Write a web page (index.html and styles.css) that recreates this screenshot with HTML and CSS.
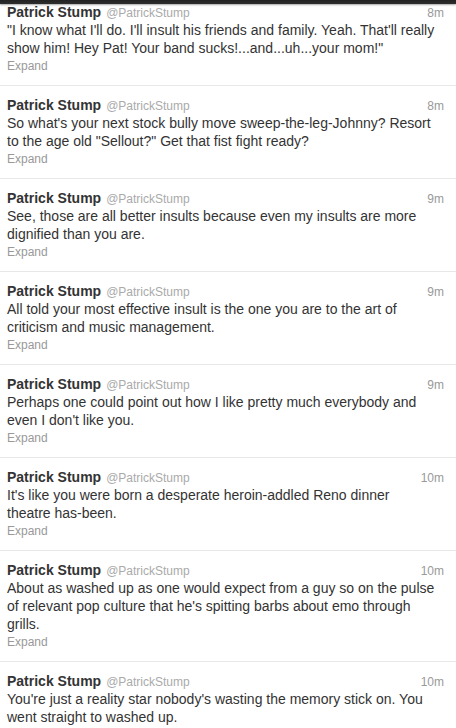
FILE: index.html
```html
<!DOCTYPE html>
<html>
<head>
<meta charset="utf-8">
<link rel="stylesheet" href="styles.css">
</head>
<body>
<div class="topbar"></div>
<div class="stream">
  <div class="tweet">
    <div class="head"><span class="name">Patrick Stump</span><span class="user">@PatrickStump</span><span class="time">8m</span></div>
    <p class="text">"I know what I'll do. I'll insult his friends and family. Yeah. That'll really show him! Hey Pat! Your band sucks!...and...uh...your mom!"</p>
    <div class="expand">Expand</div>
  </div>
  <div class="tweet">
    <div class="head"><span class="name">Patrick Stump</span><span class="user">@PatrickStump</span><span class="time">8m</span></div>
    <p class="text">So what's your next stock bully move sweep-the-leg-Johnny? Resort to the age old "Sellout?" Get that fist fight ready?</p>
    <div class="expand">Expand</div>
  </div>
  <div class="tweet">
    <div class="head"><span class="name">Patrick Stump</span><span class="user">@PatrickStump</span><span class="time">9m</span></div>
    <p class="text">See, those are all better insults because even my insults are more dignified than you are.</p>
    <div class="expand">Expand</div>
  </div>
  <div class="tweet">
    <div class="head"><span class="name">Patrick Stump</span><span class="user">@PatrickStump</span><span class="time">9m</span></div>
    <p class="text">All told your most effective insult is the one you are to the art of criticism and music management.</p>
    <div class="expand">Expand</div>
  </div>
  <div class="tweet">
    <div class="head"><span class="name">Patrick Stump</span><span class="user">@PatrickStump</span><span class="time">9m</span></div>
    <p class="text">Perhaps one could point out how I like pretty much everybody and even I don't like you.</p>
    <div class="expand">Expand</div>
  </div>
  <div class="tweet">
    <div class="head"><span class="name">Patrick Stump</span><span class="user">@PatrickStump</span><span class="time">10m</span></div>
    <p class="text">It's like you were born a desperate heroin-addled Reno dinner<br>theatre has-been.</p>
    <div class="expand">Expand</div>
  </div>
  <div class="tweet">
    <div class="head"><span class="name">Patrick Stump</span><span class="user">@PatrickStump</span><span class="time">10m</span></div>
    <p class="text">About as washed up as one would expect from a guy so on the pulse of relevant pop culture that he's spitting barbs about emo through grills.</p>
    <div class="expand">Expand</div>
  </div>
  <div class="tweet">
    <div class="head"><span class="name">Patrick Stump</span><span class="user">@PatrickStump</span><span class="time">10m</span></div>
    <p class="text">You're just a reality star nobody's wasting the memory stick on. You went straight to washed up.</p>
    <div class="expand">Expand</div>
  </div>
</div>
</body>
</html>
```
FILE: styles.css
```css
html, body {
  margin: 0;
  padding: 0;
  background: #fff;
  overflow: hidden;
}
body {
  font-family: "Liberation Sans", Arial, sans-serif;
  color: #333;
}
.topbar {
  position: fixed;
  top: 0;
  left: 0;
  right: 0;
  height: 4px;
  background: linear-gradient(#222, #2e2e2e);
  box-shadow: 0 1px 2px rgba(0, 0, 0, 0.35);
  z-index: 2;
}
.stream {
  margin-top: -8px;
}
.tweet {
  border-top: 1px solid #e8e8e8;
  padding: 10px 12px 10px 7px;
}
.head {
  display: flex;
  align-items: baseline;
  line-height: 18px;
  height: 18px;
}
.name {
  font-weight: bold;
  font-size: 14px;
  color: #333;
}
.user {
  font-size: 12px;
  color: #aaa;
  margin-left: 5px;
}
.time {
  font-size: 12px;
  color: #999;
  margin-left: auto;
}
.text {
  margin: 0 5px 0 0;
  font-size: 14px;
  line-height: 18px;
  color: #333;
}
.expand {
  font-size: 12px;
  line-height: 18px;
  color: #999;
}
```
